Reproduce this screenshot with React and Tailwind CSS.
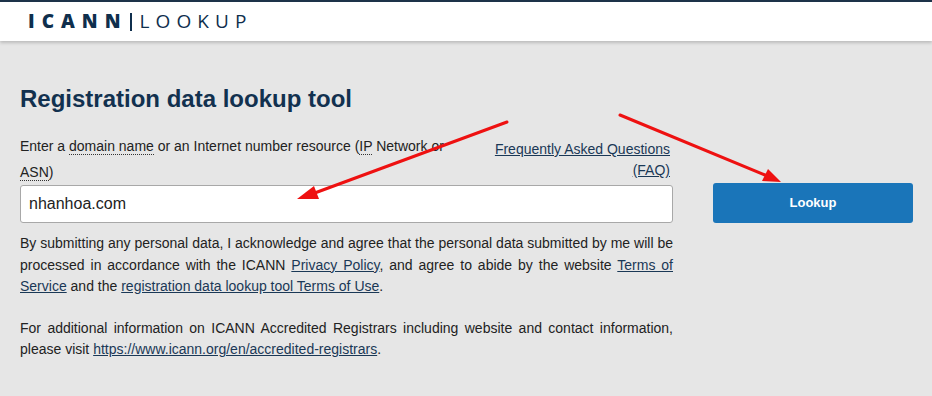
const navy = '#0f2f4d';

const Arrows = () => (
  <svg className="absolute inset-0 pointer-events-none" width="932" height="396" viewBox="0 0 932 396">
    <line x1="507" y1="122" x2="312" y2="194" stroke="#ee1111" strokeWidth="3" strokeLinecap="round" />
    <polygon points="297,199 314,186 319,199" fill="#ee1111" />
    <line x1="620" y1="115" x2="765" y2="175" stroke="#ee1111" strokeWidth="3" strokeLinecap="round" />
    <polygon points="781,182 762,181 768,169" fill="#ee1111" />
  </svg>
);

const App = () => {
  return (
    <div className="relative w-[932px] h-[396px] overflow-hidden bg-[#e6e6e6]" style={{ fontFamily: '"Liberation Sans", Arial, sans-serif' }}>
      <header className="h-[41px] bg-white border-t-2 border-[#1d3349] shadow-[0_2px_3px_rgba(0,0,0,0.18)] flex items-center pl-[28px]" style={{ fontFamily: '"Open Sans", sans-serif' }}>
        <span className="text-[19px] font-extrabold tracking-[0.37em] leading-none" style={{ color: navy }}>ICANN</span>
        <span className="ml-[2px] mr-[8px] w-[2px] h-[18px] bg-[#0f2f4d]" />
        <span className="text-[19px] font-normal tracking-[0.32em] leading-none" style={{ color: navy }}>LOOKUP</span>
      </header>

      <main className="pl-[20px] pr-[19px] pt-[44px]">
        <h1 className="text-[24px] font-bold leading-[28px] text-[#12314f]">Registration data lookup tool</h1>

        <div className="flex gap-[40px] mt-[20px]">
          <div className="w-[653px] shrink-0">
            <div className="flex justify-between items-start">
              <label className="w-[440px] text-[14px] leading-[26px] text-[#222]">
                Enter a <abbr className="no-underline border-b border-dotted border-[#333]">domain name</abbr> or an Internet number resource (<abbr className="no-underline border-b border-dotted border-[#333]">IP</abbr> Network or <abbr className="no-underline border-b border-dotted border-[#333]">ASN</abbr>)
              </label>
              <a className="w-[180px] mt-[6px] mr-[3px] text-right text-[14px] leading-[21px] underline text-[#1a3856]">Frequently Asked Questions (FAQ)</a>
            </div>
            <input
              readOnly
              value="nhanhoa.com"
              className="w-full h-[38px] bg-white border border-[#a8a8a8] rounded-[3px] px-[8px] text-[16px] text-[#222] outline-none"
            />
            <p className="mt-[10px] text-[14px] leading-[21.5px] text-[#222] text-justify">
              By submitting any personal data, I acknowledge and agree that the personal data submitted by me will be processed in accordance with the ICANN <a className="underline text-[#1a3856]">Privacy Policy</a>, and agree to abide by the website <a className="underline text-[#1a3856]">Terms of Service</a> and the <a className="underline text-[#1a3856]">registration data lookup tool Terms of Use</a>.
            </p>
            <p className="mt-[20px] text-[14px] leading-[21.5px] text-[#222] text-justify">
              For additional information on ICANN Accredited Registrars including website and contact information, please visit <a className="underline text-[#1a3856]">https://www.icann.org/en/accredited-registrars</a>.
            </p>
          </div>
          <div className="w-[200px] pt-[50px]">
            <button className="w-full h-[40px] rounded-[3px] bg-[#1a75b9] text-white text-[13px] font-bold">Lookup</button>
          </div>
        </div>
      </main>

      <Arrows />
    </div>
  );
};

export default App;
